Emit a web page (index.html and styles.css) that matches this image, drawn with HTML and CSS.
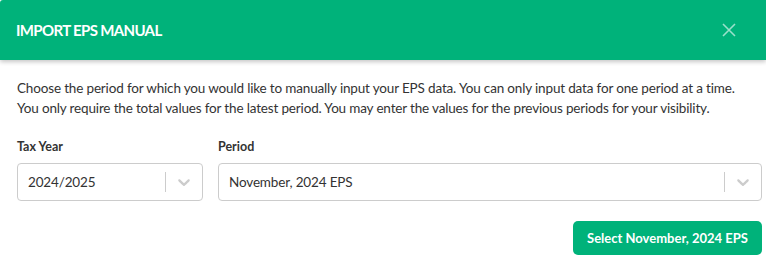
FILE: index.html
```html
<!DOCTYPE html>
<html lang="en">
<head>
<meta charset="utf-8">
<title>Import EPS Manual</title>
<link rel="stylesheet" href="styles.css">
</head>
<body>
<div class="modal">
  <header class="modal-header">
    <h1 class="modal-title">IMPORT EPS MANUAL</h1>
    <button class="close-btn" aria-label="Close">
      <svg viewBox="0 0 14 14" width="14" height="14"><path d="M1 1 L13 13 M13 1 L1 13" stroke="currentColor" stroke-width="1.6" fill="none"/></svg>
    </button>
  </header>
  <div class="modal-body">
    <p class="intro">Choose the period for which you would like to manually input your EPS data. You can only input data for one period at a time. You only require the total values for the latest period. You may enter the values for the previous periods for your visibility.</p>
    <div class="fields">
      <div class="field">
        <label class="field-label">Tax Year</label>
        <div class="select">
          <span class="select-value">2024/2025</span>
          <span class="select-sep"></span>
          <span class="select-ind"><svg viewBox="0 0 20 20" width="20" height="20"><path d="M4.516 7.548c0.436-0.446 1.043-0.481 1.576 0l3.908 3.747 3.908-3.747c0.533-0.481 1.141-0.446 1.574 0 0.436 0.445 0.408 1.197 0 1.615-0.406 0.418-4.695 4.502-4.695 4.502-0.217 0.223-0.502 0.335-0.787 0.335s-0.57-0.112-0.789-0.335c0 0-4.287-4.084-4.695-4.502s-0.436-1.170 0-1.615z" fill="currentColor"/></svg></span>
        </div>
      </div>
      <div class="field">
        <label class="field-label">Period</label>
        <div class="select">
          <span class="select-value">November, 2024 EPS</span>
          <span class="select-sep"></span>
          <span class="select-ind"><svg viewBox="0 0 20 20" width="20" height="20"><path d="M4.516 7.548c0.436-0.446 1.043-0.481 1.576 0l3.908 3.747 3.908-3.747c0.533-0.481 1.141-0.446 1.574 0 0.436 0.445 0.408 1.197 0 1.615-0.406 0.418-4.695 4.502-4.695 4.502-0.217 0.223-0.502 0.335-0.787 0.335s-0.57-0.112-0.789-0.335c0 0-4.287-4.084-4.695-4.502s-0.436-1.170 0-1.615z" fill="currentColor"/></svg></span>
        </div>
      </div>
    </div>
    <div class="actions">
      <button class="primary-btn">Select November, 2024 EPS</button>
    </div>
  </div>
</div>
</body>
</html>
```

FILE: styles.css
```css
html, body {
  margin: 0;
  padding: 0;
  background: #fff;
}
body {
  font-family: Lato, "Liberation Sans", sans-serif;
  color: #333;
}
.modal {
  width: 766px;
}
.modal-header {
  height: 60px;
  background: #00b27a;
  display: flex;
  align-items: center;
  justify-content: space-between;
  padding: 0 30px 0 16px;
  box-shadow: 0 2px 4px rgba(0,0,0,0.22);
  border-top-left-radius: 3px;
  position: relative;
}
.modal-title {
  margin: 0;
  color: #fff;
  font-size: 15px;
  font-weight: 700;
  letter-spacing: -0.65px;
}
.close-btn {
  border: 0;
  background: none;
  padding: 0;
  color: rgba(255,255,255,0.6);
  display: flex;
  cursor: pointer;
}
.modal-body {
  padding: 18px 4px 17px 17px;
}
.intro {
  margin: 0;
  max-width: 731px;
  font-size: 13.5px;
  letter-spacing: -0.16px;
  line-height: 20px;
  color: #333;
}
.fields {
  display: grid;
  grid-template-columns: 186px 1fr;
  column-gap: 15px;
  margin-top: 19px;
}
.field-label {
  display: block;
  font-size: 12.5px;
  font-weight: 700;
  line-height: 20px;
  color: #333;
  margin-bottom: 6px;
}
.select {
  box-sizing: border-box;
  height: 38px;
  border: 1px solid #ccc;
  border-radius: 4px;
  display: flex;
  align-items: stretch;
  background: #fff;
}
.select-value {
  flex: 1;
  display: flex;
  align-items: center;
  padding-left: 10px;
  font-size: 13.5px;
  letter-spacing: -0.15px;
  color: #333;
}
.select-sep {
  width: 1px;
  background: #ccc;
  margin: 8px 0;
}
.select-ind {
  width: 36px;
  display: flex;
  align-items: center;
  justify-content: center;
  color: #ccc;
}
.actions {
  display: flex;
  justify-content: flex-end;
  margin-top: 20px;
}
.primary-btn {
  height: 34px;
  width: 189px;
  border: 0;
  border-radius: 5px;
  background: #00b27a;
  color: #fff;
  font-family: inherit;
  font-size: 13px;
  font-weight: 700;
  padding: 0;
  cursor: pointer;
}
```
